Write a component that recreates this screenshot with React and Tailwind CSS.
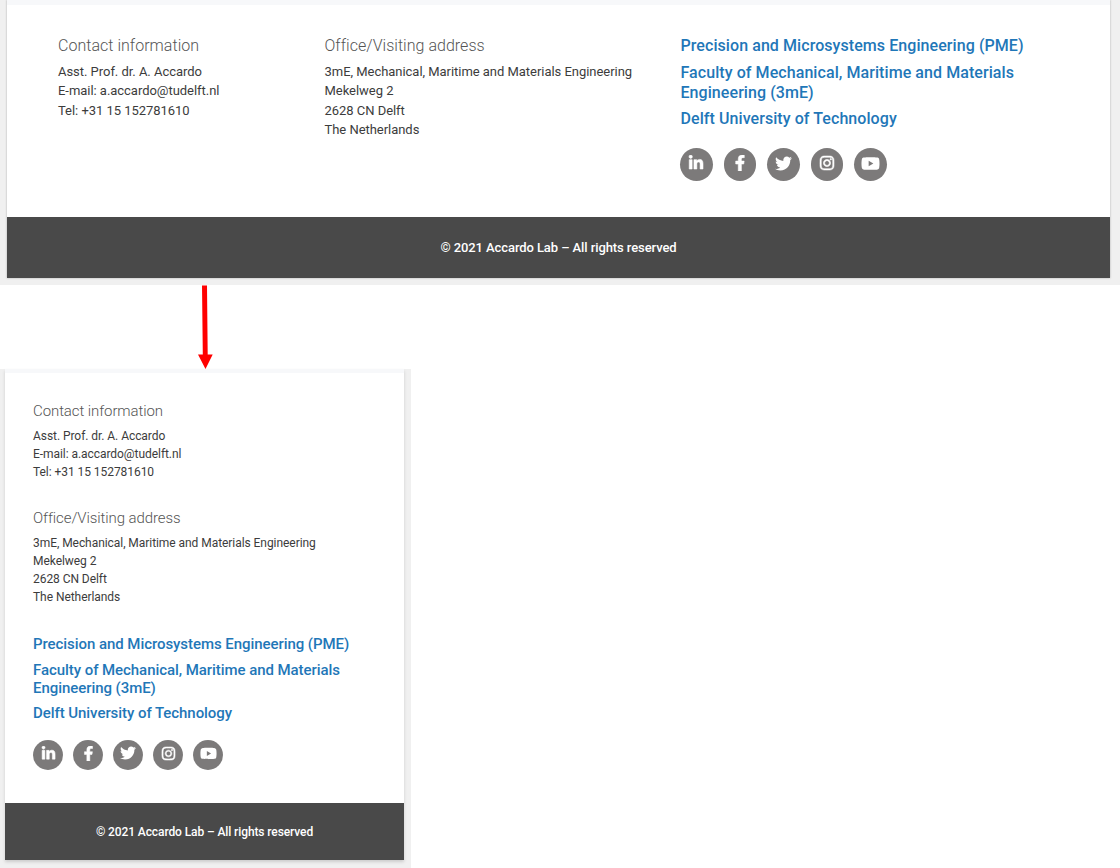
import React from "react";
import { FaLinkedinIn, FaFacebookF, FaTwitter, FaInstagram, FaYoutube } from "react-icons/fa";

const contact = ["Asst. Prof. dr. A. Accardo", "E-mail: a.accardo@tudelft.nl", "Tel: +31 15 152781610"];
const address = [
  "3mE, Mechanical, Maritime and Materials Engineering",
  "Mekelweg 2",
  "2628 CN Delft",
  "The Netherlands",
];
const icons = [
  {
    Icon: FaLinkedinIn,
    wide: "h-[16px] w-[16px] stroke-white [stroke-width:18]",
    narrow: "h-[15px] w-[15px] stroke-white [stroke-width:18]",
  },
  {
    Icon: FaFacebookF,
    wide: "h-[16px] w-[16px] stroke-white [stroke-width:18]",
    narrow: "h-[15px] w-[15px] stroke-white [stroke-width:18]",
  },
  { Icon: FaTwitter, wide: "h-[17px] w-[17px]", narrow: "h-[16px] w-[16px]" },
  {
    Icon: FaInstagram,
    wide: "h-[16px] w-[16px] stroke-white [stroke-width:18]",
    narrow: "h-[15px] w-[15px] stroke-white [stroke-width:18]",
  },
  { Icon: FaYoutube, wide: "h-[19px] w-[19px]", narrow: "h-[17px] w-[17px]" },
];

const wide = {
  name: "wide",
  heading: "text-[16px] leading-5 font-light tracking-[0.03px] text-[#555]",
  lines: "mt-[6px] text-[13px] leading-[19.3px] tracking-[-0.035px] text-[#3c3c3c]",
  links: "flex flex-col gap-[6.5px] text-[16px] leading-5 font-medium tracking-[0.07px] text-[#1f77b8]",
  icons: "-ml-[0.5px] mt-[19.2px] flex gap-[11px]",
  circle: "flex h-[32.6px] w-[32.6px] items-center justify-center rounded-full bg-[#7c7a7a] pb-[2.4px] text-white",
};

const narrow = {
  name: "narrow",
  heading: "text-[15px] leading-5 font-light tracking-[-0.09px] text-[#555]",
  lines: "mt-[7.4px] text-[12px] leading-[17.7px] tracking-[-0.055px] text-[#3c3c3c]",
  links: "flex flex-col gap-[7.5px] text-[15px] leading-[18px] font-medium tracking-[-0.06px] text-[#1f77b8]",
  icons: "mt-[17.5px] flex gap-[10px]",
  circle: "flex h-[30px] w-[30px] items-center justify-center rounded-full bg-[#7c7a7a] pb-[3px] text-white",
};

function InfoBlock({ title, lines, size }) {
  return (
    <section className="whitespace-nowrap">
      <h2 className={size.heading}>{title}</h2>
      <div className={size.lines}>
        {lines.map((line) => (
          <p key={line}>{line}</p>
        ))}
      </div>
    </section>
  );
}

function Links({ size }) {
  return (
    <section className="whitespace-nowrap">
      <div className={size.links}>
        <a>Precision and Microsystems Engineering (PME)</a>
        <a>
          Faculty of Mechanical, Maritime and Materials
          <br />
          Engineering (3mE)
        </a>
        <a>Delft University of Technology</a>
      </div>
      <div className={size.icons}>
        {icons.map(({ Icon, ...sizes }, i) => (
          <span key={i} className={size.circle}>
            <Icon className={sizes[size.name]} />
          </span>
        ))}
      </div>
    </section>
  );
}

export default function App() {
  return (
    <div className="h-[868px] w-[1120px] overflow-hidden bg-white font-['Roboto',sans-serif]">
      <div className="h-[285px] bg-[#f0f0f0] pr-[10px] pl-[7px]">
        <footer className="flex h-[278px] flex-col bg-white shadow-[0_0_2px_#aaa]">
          <div className="h-[5px] bg-[#f7f8fa]" />
          <div className="grid h-[212px] grid-cols-[266.5px_356px_1fr] pt-[31px] pl-[51px]">
            <InfoBlock title="Contact information" lines={contact} size={wide} />
            <InfoBlock title="Office/Visiting address" lines={address} size={wide} />
            <Links size={wide} />
          </div>
          <div className="flex h-[61px] items-center justify-center bg-[#494949] text-[13px] font-medium tracking-[-0.09px] text-white">
            © 2021 Accardo Lab – All rights reserved
          </div>
        </footer>
      </div>

      <div className="h-[84px] pl-[197px]">
        <svg width="16" height="84" viewBox="0 0 16 84" fill="#f00">
          <path d="M5 .5h5l.7 69h5L8.5 84 1 69.5h4.8z" />
        </svg>
      </div>

      <div className="h-[499px] w-[411px] bg-[#f0f0f0] pr-[7px] pl-[5px]">
        <footer className="flex h-[491px] flex-col bg-white shadow-[0_2px_3px_#ccc]">
          <div className="h-[4px] bg-[#f7f8fa]" />
          <div className="flex h-[430px] flex-col pt-[28px] pl-[28px]">
            <InfoBlock title="Contact information" lines={contact} size={narrow} />
            <div className="pt-[26.6px]">
              <InfoBlock title="Office/Visiting address" lines={address} size={narrow} />
            </div>
            <div className="pt-[29.1px]">
              <Links size={narrow} />
            </div>
          </div>
          <div className="flex h-[57px] items-center justify-center bg-[#494949] text-[12px] font-medium tracking-[-0.1px] text-white">
            © 2021 Accardo Lab – All rights reserved
          </div>
        </footer>
      </div>
    </div>
  );
}
